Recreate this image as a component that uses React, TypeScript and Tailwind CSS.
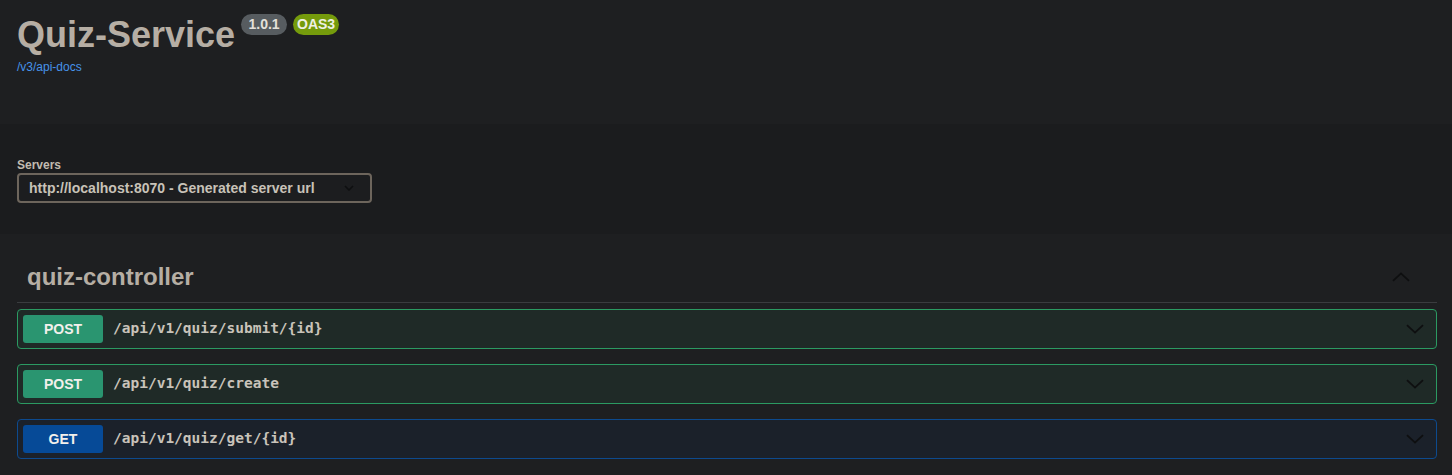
import React from "react";

type Op = { method: "POST" | "GET"; path: string };

const ops: Op[] = [
  { method: "POST", path: "/api/v1/quiz/submit/{id}" },
  { method: "POST", path: "/api/v1/quiz/create" },
  { method: "GET", path: "/api/v1/quiz/get/{id}" },
];

const ChevronDown = () => (
  <svg width="18" height="10" viewBox="0 0 18 10" fill="none">
    <path d="M1 1.2 L9 8.6 L17 1.2" stroke="#0e0f10" strokeWidth="1.8" />
  </svg>
);

const ChevronUp = () => (
  <svg width="18" height="10" viewBox="0 0 18 10" fill="none">
    <path d="M1 8.8 L9 1.4 L17 8.8" stroke="#0e0f10" strokeWidth="1.8" />
  </svg>
);

const OpBlock = ({ op }: { op: Op }) => {
  const isPost = op.method === "POST";
  return (
    <div
      className={
        isPost
          ? "flex h-[40px] items-center rounded-[4px] border border-[#2b9a62] bg-[#1f2a27] px-[5px] mb-[15px]"
          : "flex h-[40px] items-center rounded-[4px] border border-[#0d4a8e] bg-[#1b212a] px-[5px] mb-[15px]"
      }
    >
      <div
        className={
          isPost
            ? "flex h-[28px] w-[80px] items-center justify-center rounded-[3px] bg-[#2a9570] text-[14px] font-bold text-[#f2f0ec]"
            : "flex h-[28px] w-[80px] items-center justify-center rounded-[3px] bg-[#064a97] text-[14px] font-bold text-[#f2f0ec]"
        }
      >
        {op.method}
      </div>
      <span className="ml-[10px] font-['DejaVu_Sans_Mono',monospace] text-[14.5px] font-bold text-[#c9c3ba]">
        {op.path}
      </span>
      <span className="ml-auto mr-[7px] flex">
        <ChevronDown />
      </span>
    </div>
  );
};

export default function App() {
  return (
    <div className="min-h-screen bg-[#1e1f21] font-['Liberation_Sans',Arial,sans-serif]">
      {/* info */}
      <section className="h-[124px] pl-[17px] pr-[15px] pt-[14px]">
        <div className="flex items-start gap-[6px]">
          <h1 className="mt-[3px] text-[36px] font-bold leading-[36px] text-[#b6aea4]">
            Quiz-Service
          </h1>
          <span className="flex h-[21px] w-[46px] items-center justify-center rounded-full bg-[#575c60] text-[14px] font-bold text-[#e4e0da]">
            1.0.1
          </span>
          <span className="flex h-[21px] w-[46px] items-center justify-center rounded-full bg-[#759b0c] text-[14px] font-bold text-[#eef0e4]">
            OAS3
          </span>
        </div>
        <a className="mt-[7px] block text-[12px] leading-[14px] text-[#4693ea]">
          /v3/api-docs
        </a>
      </section>

      {/* servers */}
      <section className="h-[110px] bg-[#1b1c1e] pl-[17px] pt-[34px]">
        <label className="block text-[12px] font-bold leading-[14px] text-[#c2bbb0]">
          Servers
        </label>
        <div className="mt-px flex h-[30px] w-[355px] items-center rounded-[4px] border-2 border-[#6d655c] bg-[#1c1d1f] pl-[10px] pr-[16px]">
          <span className="text-[14px] font-bold text-[#c8c2b8]">
            http://localhost:8070 - Generated server url
          </span>
          <svg className="ml-auto" width="10" height="6" viewBox="0 0 10 6" fill="none">
            <path d="M1 1 L5 5 L9 1" stroke="#0e0f10" strokeWidth="1.6" />
          </svg>
        </div>
      </section>

      {/* tag */}
      <section className="pl-[17px] pr-[15px] pt-[29px]">
        <div className="flex items-center border-b border-[#3a3c3f] pb-[11px] pl-[10px]">
          <h3 className="text-[24px] font-bold leading-[28px] text-[#b6aea4]">
            quiz-controller
          </h3>
          <span className="ml-auto mr-[27px] flex">
            <ChevronUp />
          </span>
        </div>
        <div className="mt-[6px]">
          {ops.map((op) => (
            <OpBlock key={op.path} op={op} />
          ))}
        </div>
      </section>
    </div>
  );
}
